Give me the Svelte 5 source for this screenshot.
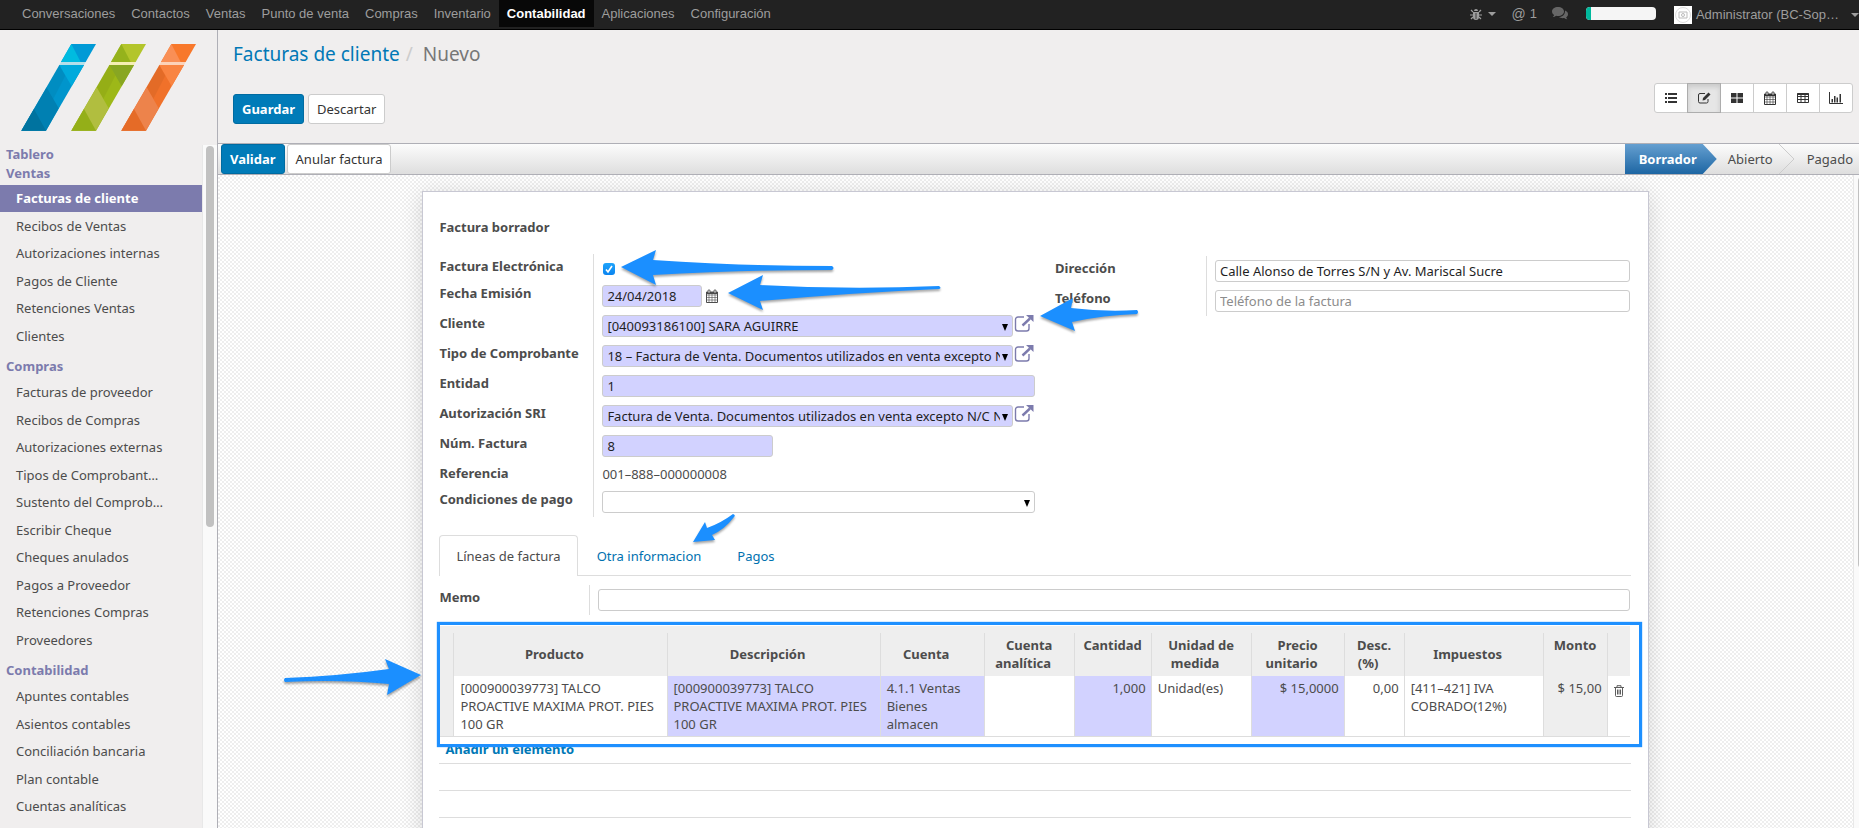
<script lang="ts">
  interface MenuSection {
    title: string;
    items: string[];
  }

  interface Field {
    id: string;
    label: string;
    kind: string;
    value: string;
    required: boolean;
  }

  const apps = [
    "Conversaciones",
    "Contactos",
    "Ventas",
    "Punto de venta",
    "Compras",
    "Inventario",
    "Contabilidad",
    "Aplicaciones",
    "Configuración",
  ];

  const sections: MenuSection[] = [
    { title: "Tablero", items: [] },
    {
      title: "Ventas",
      items: [
        "Facturas de cliente",
        "Recibos de Ventas",
        "Autorizaciones internas",
        "Pagos de Cliente",
        "Retenciones Ventas",
        "Clientes",
      ],
    },
    {
      title: "Compras",
      items: [
        "Facturas de proveedor",
        "Recibos de Compras",
        "Autorizaciones externas",
        "Tipos de Comprobant…",
        "Sustento del Comprob…",
        "Escribir Cheque",
        "Cheques anulados",
        "Pagos a Proveedor",
        "Retenciones Compras",
        "Proveedores",
      ],
    },
    {
      title: "Contabilidad",
      items: [
        "Apuntes contables",
        "Asientos contables",
        "Conciliación bancaria",
        "Plan contable",
        "Cuentas analíticas",
      ],
    },
  ];

  // Colores de las tres franjas del logo
  const stripes = [
    { x: 0, base: "#009ad6", top: "#00bbe0", band: "#b4dfe9", light: "#00aadc", mid: "#0095cc", low: "#0080b2", foot: "#00739f" },
    { x: 150, base: "#b3c52b", top: "#95b21c", band: "#f5eeb4", light: "#88a622", mid: "#9db818", low: "#b1be3f", foot: "#94af18" },
    { x: 300, base: "#f8782b", top: "#f98f56", band: "#fcd2b8", light: "#f98441", mid: "#f0712a", low: "#ed834b", foot: "#e56b27" },
  ];

  const views = ["list", "form", "kanban", "calendar", "pivot", "graph"];

  const fields: Field[] = [
    { id: "electronica", label: "Factura Electrónica", kind: "check", value: "", required: false },
    { id: "fecha", label: "Fecha Emisión", kind: "date", value: "24/04/2018", required: true },
    { id: "cliente", label: "Cliente", kind: "link", value: "[040093186100] SARA AGUIRRE", required: true },
    { id: "tipo", label: "Tipo de Comprobante", kind: "link", value: "18 – Factura de Venta. Documentos utilizados en venta excepto N/C N/D", required: true },
    { id: "entidad", label: "Entidad", kind: "text", value: "1", required: true },
    { id: "autorizacion", label: "Autorización SRI", kind: "link", value: "Factura de Venta. Documentos utilizados en venta excepto N/C N/D", required: true },
    { id: "numero", label: "Núm. Factura", kind: "short", value: "8", required: true },
    { id: "referencia", label: "Referencia", kind: "plain", value: "001–888–000000008", required: false },
    { id: "condiciones", label: "Condiciones de pago", kind: "select", value: "", required: false },
  ];

  const arrows = [
    "M622 267 L657 250 L654 260 Q740 266 833 266 Q836 268 833 270 Q740 270 654 275 L657 285 Z",
    "M729 293 L764 275 L761 285 Q850 290 940 286 Q943 288 940 289 Q850 293 761 301 L764 310 Z",
    "M1041 316 L1074 298 L1072 308 Q1105 312 1138 310 Q1140 312 1138 314 Q1105 315 1073 322 L1076 331 Z",
    "M694 542 L706 522 L708 528 Q722 523 734 514 Q737 515 735 517 Q726 529 713 535 L716 540 Z",
    "M422 675 L386 659 L390 669 Q340 676 286 678 Q284 680 286 682 Q340 679 390 684 L388 695 Z",
  ];

  const headers = [
    "Producto",
    "Descripción",
    "Cuenta",
    "Cuenta analítica",
    "Cantidad",
    "Unidad de medida",
    "Precio unitario",
    "Desc. (%)",
    "Impuestos",
    "Monto",
  ];

  let activeView = $state("form");
  let tab = $state("Líneas de factura");
  let checked = $state(true);
</script>

{#snippet calendarIcon()}
  <path d="M1.500 6h11 M1.500 8.500h11 M1.500 11h11 M4 4v9.500 M7 4v9.500 M10 4v9.500" fill="none" stroke="currentColor" stroke-width=".6" />
  <path d="M1.500 3h11v10.500h-11z" fill="none" stroke="currentColor" stroke-width="1" />
  <path d="M1.500 3h11v2h-11z" fill="currentColor" />
  <path d="M3 1h2v3H3z M9 1h2v3H9z" fill="#ddd" stroke="currentColor" stroke-width=".7" />
{/snippet}

<div class="app">
  <nav class="topbar">
    <div class="apps">
      {#each apps as app}
        <a href="#{app}" class:active={app === "Contabilidad"}>{app}</a>
      {/each}
    </div>
    <div class="systray">
      <button class="tray debug" aria-label="Depurar">
        <svg width="12" height="12" viewBox="0 0 12 12">
          <path d="M4 3a2 2 0 0 1 4 0z M3 4h6v5a3 3 0 0 1-6 0z" fill="currentColor" />
          <path d="M1 2l2 2M11 2L9 4M0 7h12M1 11l2-2M11 11L9 9" stroke="currentColor" stroke-width="1.200" />
          <path d="M6 5v6" stroke="#222" stroke-width=".8" />
        </svg>
        <span class="caret"></span>
      </button>
      <a class="tray mentions" href="#menciones"><span class="at">@</span> 1</a>
      <button class="tray chat" aria-label="Mensajes">
        <svg width="16" height="13" viewBox="0 0 16 13">
          <path d="M6 0c3.500 0 6 2 6 4.500S9.500 9 6 9c-.7 0-1.300 0-1.800-.2C3 9.700 2 10 .8 10c.7-.6 1.200-1.300 1.300-2C.8 7.200 0 6 0 4.500 0 2 2.500 0 6 0z" fill="#666" />
          <path d="M13 3.500c2 .8 3 2 3 3.700 0 1.300-.7 2.300-1.800 3 .1.800.6 1.500 1.300 2.100-1.200 0-2.300-.4-3.300-1.200-2 .3-4 0-5.400-1 3.800-.1 6.400-2.700 6.200-6.600z" fill="#666" />
        </svg>
      </button>
      <div class="progress"><div class="done"></div></div>
      <button class="tray user">
        <svg width="18" height="18" viewBox="0 0 18 18">
          <path d="M0 0h18v18H0z" fill="#fff" />
          <circle cx="9" cy="9" r="7.500" fill="none" stroke="#ddd" />
          <path d="M5 6h8v6H5z" fill="none" stroke="#bbb" />
          <circle cx="9" cy="9" r="1.500" fill="none" stroke="#bbb" />
        </svg>
        <span>Administrator (BC-Sop…</span>
        <span class="caret"></span>
      </button>
    </div>
  </nav>

  <div class="body">
    <aside>
      <svg class="logo" width="200" height="105" viewBox="0 0 600 315">
        {#each stripes as s}
          <g transform="translate({s.x} 0)">
            <polygon points="184,27 258,27 227,81 153,81" fill={s.base} />
            <polygon points="184,27 212,81 153,81" fill={s.top} />
            <polygon points="153,81 227,81 222,90 148,90" fill={s.band} />
            <polygon points="148,90 222,90 108,287 34,287" fill={s.mid} />
            <polygon points="148,90 222,90 185,154" fill={s.light} />
            <polygon points="148,90 166,122 130,192 110,157" fill="#000" opacity=".05" />
            <polygon points="110,157 146,220 108,287 34,287" fill={s.low} />
            <polygon points="72,222 108,287 34,287" fill={s.foot} />
          </g>
        {/each}
      </svg>
      <div class="menu">
        <div class="sections">
          {#each sections as section}
            <h4>{section.title}</h4>
            {#if section.items.length}
              <ul>
                {#each section.items as item}
                  <li><a href="#{item}" class:active={item === "Facturas de cliente"}>{item}</a></li>
                {/each}
              </ul>
            {/if}
          {/each}
        </div>
        <div class="track"><div class="thumb"></div></div>
      </div>
    </aside>

    <main>
      <header>
        <h1><a href="#facturas">Facturas de cliente</a><span class="slash">/</span><span>Nuevo</span></h1>
        <div class="controls">
          <div class="buttons">
            <button class="btn primary">Guardar</button>
            <button class="btn">Descartar</button>
          </div>
          <div class="switcher">
            {#each views as view}
              <button aria-label={view} class:active={activeView === view} onclick={() => (activeView = view)}>
                <svg width="14" height="14" viewBox="0 0 14 14">
                  {#if view === "list"}
                    <path d="M1 3h2M1 7h2M1 11h2M4 3h9M4 7h9M4 11h9" stroke="currentColor" stroke-width="1.800" />
                  {:else if view === "form"}
                    <path d="M8 2.500H3A1.500 1.500 0 0 0 1.500 4v6.500A1.500 1.500 0 0 0 3 12h6.500a1.500 1.500 0 0 0 1.500-1.500V8" fill="none" stroke="currentColor" />
                    <path d="M5.500 9.500l.5-2.500 5.500-5.500 2 2L8 9z" fill="currentColor" />
                  {:else if view === "kanban"}
                    <path d="M1 2h5.500v4.500H1z M7.500 2H13v4.500H7.500z M1 7.500h5.500V12H1z M7.500 7.500H13V12H7.500z" fill="currentColor" />
                  {:else if view === "calendar"}
                    {@render calendarIcon()}
                  {:else if view === "pivot"}
                    <path d="M1.500 2.500h11v9h-11z M1.500 5.500h11 M1.500 8.500h11 M5 3v8.500 M9 3v8.500" fill="none" stroke="currentColor" />
                    <path d="M1.500 2h11v2h-11z" fill="currentColor" />
                  {:else}
                    <path d="M.5 1v11.500H14" fill="none" stroke="currentColor" />
                    <path d="M2.500 8h1.500v3.500H2.500z M5 5h1.500v6.500H5z M7.500 6.500H9v5H7.500z M10.500 3H12v8.500h-1.500z" fill="currentColor" />
                  {/if}
                </svg>
              </button>
            {/each}
          </div>
        </div>
      </header>

      <div class="statusbar">
        <button class="btn primary">Validar</button>
        <button class="btn">Anular factura</button>
        <ol>
          <li class="current">Borrador</li>
          <li class="next">
            Abierto
            <svg width="16" height="30" viewBox="0 0 16 30"><path d="M0 0l15 15L0 30" fill="none" stroke="#ccc" /></svg>
          </li>
          <li>Pagado</li>
        </ol>
      </div>

      <div class="content">
        <div class="canvas">
          <section class="sheet">
            <h2>Factura borrador</h2>

            <div class="groups">
              <div class="group left">
                {#each fields as f}
                  <div class="row {f.kind}">
                    {#if f.kind === "plain"}
                      <span class="label">{f.label}</span>
                    {:else}
                      <label class="label" for={f.id}>{f.label}</label>
                    {/if}
                    <div class="value">
                      {#if f.kind === "check"}
                        <input type="checkbox" id={f.id} bind:checked />
                        {#if checked}
                          <svg class="tick" width="12" height="12" viewBox="0 0 12 12">
                            <path d="M3 6.500l2 2.500 4-6" fill="none" stroke="#fff" stroke-width="1.600" />
                          </svg>
                        {/if}
                      {:else if f.kind === "date"}
                        <input type="text" id={f.id} class="required" value={f.value} />
                        <svg width="14" height="15" viewBox="0 0 14 15">{@render calendarIcon()}</svg>
                      {:else if f.kind === "link" || f.kind === "select"}
                        <div class="combo">
                          <select id={f.id} class:required={f.required}>
                            <option>{f.value}</option>
                          </select>
                          <svg class="drop" width="6" height="7" viewBox="0 0 6 7"><path d="M0 0h6L3 7z" fill="#000" /></svg>
                        </div>
                        {#if f.kind === "link"}
                          <button class="open" aria-label="Abrir {f.label}">
                            <svg width="20" height="18" viewBox="0 0 20 18">
                              <path d="M10 2H4a2.500 2.500 0 0 0-2.500 2.500v9A2.500 2.500 0 0 0 4 16h8.500a2.500 2.500 0 0 0 2.500-2.500V9" fill="none" stroke="#7c7bad" stroke-width="1.400" />
                              <path d="M8.500 10.500L16 3.500" stroke="#7c7bad" stroke-width="2.400" />
                              <path d="M12 0h7.500v7z" fill="#7c7bad" />
                            </svg>
                          </button>
                        {/if}
                      {:else if f.kind === "plain"}
                        <span>{f.value}</span>
                      {:else}
                        <input type="text" id={f.id} class="required" value={f.value} />
                      {/if}
                    </div>
                  </div>
                {/each}
              </div>

              <div class="group right">
                <div class="row">
                  <label class="label" for="direccion">Dirección</label>
                  <div class="value">
                    <input type="text" id="direccion" value="Calle Alonso de Torres S/N y Av. Mariscal Sucre" />
                  </div>
                </div>
                <div class="row">
                  <label class="label" for="telefono">Teléfono</label>
                  <div class="value">
                    <input type="text" id="telefono" placeholder="Teléfono de la factura" />
                  </div>
                </div>
              </div>
            </div>

            <div class="tabs">
              {#each ["Líneas de factura", "Otra informacion", "Pagos"] as name}
                <button class:active={tab === name} onclick={() => (tab = name)}>{name}</button>
              {/each}
            </div>

            <div class="group memo">
              <div class="row">
                <label class="label" for="memo">Memo</label>
                <div class="value"><input type="text" id="memo" /></div>
              </div>
            </div>

            <div class="lines">
              <table>
                <colgroup>
                  <col class="c-handle" />
                  <col />
                  <col />
                  <col class="c-account" />
                  <col class="c-analytic" />
                  <col class="c-qty" />
                  <col class="c-uom" />
                  <col class="c-price" />
                  <col class="c-disc" />
                  <col class="c-tax" />
                  <col class="c-total" />
                  <col class="c-trash" />
                </colgroup>
                <thead>
                  <tr>
                    <th></th>
                    {#each headers as h}
                      <th class="sortable">{h}</th>
                    {/each}
                    <th></th>
                  </tr>
                </thead>
                <tbody>
                  <tr>
                    <td class="handle"></td>
                    <td>[000900039773] TALCO PROACTIVE MAXIMA PROT. PIES 100 GR</td>
                    <td class="required">[000900039773] TALCO PROACTIVE MAXIMA PROT. PIES 100 GR</td>
                    <td class="required">4.1.1 Ventas Bienes almacen</td>
                    <td></td>
                    <td class="required number">1,000</td>
                    <td>Unidad(es)</td>
                    <td class="required number">$ 15,0000</td>
                    <td class="number">0,00</td>
                    <td>[411–421] IVA COBRADO(12%)</td>
                    <td class="readonly number">$ 15,00</td>
                    <td class="trash">
                      <button aria-label="Eliminar">
                        <svg width="10" height="12" viewBox="0 0 10 12">
                          <path d="M0 2.500h10M3 2V.7h4V2M1.500 3v7.500a1 1 0 0 0 1 1h5a1 1 0 0 0 1-1V3M3.500 4.500v5M5 4.500v5M6.500 4.500v5" fill="none" stroke="#4c4c4c" stroke-width=".9" />
                        </svg>
                      </button>
                    </td>
                  </tr>
                </tbody>
              </table>
              <div class="frame"></div>
            </div>
            <div class="extra"><a href="#nuevo">Añadir un elemento</a></div>
            <div class="extra"></div>
            <div class="extra"></div>
            <div class="extra"></div>

            <svg class="marks" width="800" height="400" viewBox="423 191 800 400">
              {#each arrows as d}
                <path {d} />
              {/each}
            </svg>
          </section>
        </div>
        <div class="page-track"><div class="page-thumb"></div></div>
      </div>
    </main>
  </div>
</div>

<style>
  :global(body) {
    margin: 0;
  }

  .app,
  .app :global(*) {
    box-sizing: border-box;
  }

  .app {
    height: 100vh;
    display: flex;
    flex-direction: column;
    overflow: hidden;
    font-family: "Noto Sans", "Lucida Grande", sans-serif;
    font-size: 13px;
    line-height: 18px;
    color: #4c4c4c;
    background: #f0eeee;
  }

  a {
    text-decoration: none;
  }

  svg {
    display: block;
  }

  button,
  input,
  select {
    font: inherit;
    margin: 0;
  }

  ul,
  ol {
    list-style: none;
    margin: 0;
    padding: 0;
  }

  /* Barra superior */
  .topbar {
    flex: none;
    display: flex;
    justify-content: space-between;
    height: 30px;
    padding-left: 14px;
    background: #222;
    border-bottom: 1px solid #000;
    font-family: "Liberation Sans", Helvetica, sans-serif;
    white-space: nowrap;
  }

  .apps {
    display: flex;
  }

  .apps a {
    height: 27px;
    padding: 0 8px;
    line-height: 27px;
    color: #9d9d9d;
  }

  .apps a.active {
    background: #080808;
    color: #fff;
    font-weight: bold;
  }

  .systray {
    display: flex;
    align-items: center;
    height: 27px;
  }

  .tray {
    display: flex;
    align-items: center;
    padding: 0;
    border: 0;
    background: none;
    color: #9d9d9d;
  }

  .caret {
    border: 4px solid transparent;
    border-top-color: currentColor;
    border-bottom: 0;
  }

  .debug {
    gap: 6px;
    margin-right: 16px;
  }

  .mentions {
    gap: 4px;
    margin-right: 15px;
  }

  .at {
    font-size: 14px;
  }

  .chat {
    margin-right: 18px;
  }

  .progress {
    width: 70px;
    height: 13px;
    margin-right: 18px;
    border-radius: 4px;
    background: #f5f5f5;
    overflow: hidden;
  }

  .done {
    width: 5px;
    height: 100%;
    background: #00b89c;
  }

  .user {
    gap: 4px;
    padding-top: 3px;
  }

  .user .caret {
    margin-left: 8px;
  }

  .body {
    flex: 1;
    display: flex;
    min-height: 0;
  }

  /* Menú lateral */
  aside {
    flex: none;
    display: flex;
    flex-direction: column;
    width: 218px;
    border-right: 1px solid #afafb6;
  }

  .logo {
    flex: none;
    margin: 5px 0 5px 10px;
  }

  .menu {
    flex: 1;
    display: flex;
    min-height: 0;
    overflow: hidden;
  }

  .sections {
    flex: 1;
  }

  h4 {
    margin: 0;
    padding: 7px 0 4px 6px;
    font-size: 13px;
    line-height: 18px;
    color: #7c7bad;
  }

  h4:first-child {
    padding: 0 0 0 6px;
  }

  h4:nth-child(2) {
    padding: 1px 0 3px 6px;
  }

  li a {
    display: block;
    height: 27px;
    padding-left: 16px;
    line-height: 27px;
    color: #4c4c4c;
    white-space: nowrap;
  }

  li:nth-child(even) a {
    height: 28px;
    line-height: 28px;
  }

  li a.active {
    background: #7c7bad;
    color: #fff;
    font-weight: bold;
  }

  .track {
    width: 15px;
    padding: 1px 3px;
    background: #fafafa;
    border-left: 1px solid #e8e8e8;
  }

  .thumb {
    width: 8px;
    height: 56%;
    border-radius: 4px;
    background: #c1c1c1;
  }

  /* Zona principal */
  main {
    flex: 1;
    display: flex;
    flex-direction: column;
    min-width: 0;
  }

  header {
    flex: none;
    padding: 12px 6px 19px 15px;
    border-bottom: 1px solid #afafb6;
  }

  h1 {
    margin: 0 0 17px;
    font-size: 19px;
    font-weight: normal;
    line-height: 24px;
    color: #777;
  }

  h1 a {
    color: #0078b6;
  }

  .slash {
    padding: 0 10px 0 6px;
    color: #ccc;
  }

  .controls {
    display: flex;
    justify-content: space-between;
  }

  .buttons {
    display: flex;
    gap: 4px;
    padding-top: 11px;
  }

  .btn {
    height: 30px;
    padding: 0 8px;
    border: 1px solid #ccc;
    border-radius: 3px;
    background: #fff;
    color: #333;
    white-space: nowrap;
  }

  .btn.primary {
    border-color: #006ba1;
    background: #007bb8;
    color: #fff;
    font-weight: bold;
  }

  .switcher {
    display: flex;
    align-self: flex-start;
  }

  .switcher button {
    display: flex;
    align-items: center;
    justify-content: center;
    width: 34px;
    height: 30px;
    margin-left: -1px;
    padding: 0;
    border: 1px solid #ccc;
    background: #fff;
    color: #333;
  }

  .switcher button:first-child {
    border-radius: 3px 0 0 3px;
  }

  .switcher button:last-child {
    border-radius: 0 3px 3px 0;
  }

  .switcher button.active {
    position: relative;
    border-color: #adadad;
    background: #e6e6e6;
    box-shadow: inset 0 3px 5px rgba(0, 0, 0, 0.125);
  }

  .statusbar {
    flex: none;
    display: flex;
    gap: 2px;
    height: 31px;
    padding-left: 3px;
    border-bottom: 1px solid #afafb6;
    background: linear-gradient(#fcfcfc, #dedede);
  }

  ol {
    display: flex;
    margin-left: auto;
    line-height: 30px;
  }

  ol li {
    padding: 0 6px 0 12px;
  }

  .current {
    padding: 0 20px 0 14px;
    background: linear-gradient(#659fd0, #1d66a3);
    clip-path: polygon(0 0, calc(100% - 14px) 0, 100% 50%, calc(100% - 14px) 100%, 0 100%);
    color: #fff;
    font-weight: bold;
  }

  .next {
    display: flex;
    gap: 6px;
    padding: 0 0 0 11px;
  }

  .content {
    flex: 1;
    display: flex;
    min-height: 0;
    overflow: hidden;
  }

  .canvas {
    flex: 1;
    padding-top: 16px;
    background: repeating-conic-gradient(#eee 0 25%, #fff 0 50%) 0 0 / 4px 4px;
  }

  .page-track {
    flex: none;
    width: 6px;
    padding: 2px 0 0 4px;
    overflow: hidden;
    background: #fafafa;
    border-left: 1px solid #e8e8e8;
  }

  .page-thumb {
    width: 8px;
    height: 60%;
    border-radius: 4px;
    background: #c1c1c1;
  }

  /* Hoja del formulario */
  .sheet {
    position: relative;
    width: 75%;
    min-height: 100%;
    margin: 0 auto;
    padding: 26px 17px 16px 16px;
    border: 1px solid #c8c8d3;
    background: #fff;
    box-shadow: 0 4px 20px rgba(0, 0, 0, 0.15);
  }

  h2 {
    margin: 0 0 18px;
    font-size: 13px;
    line-height: 18px;
  }

  .groups {
    display: grid;
    grid-template-columns: minmax(0, 1fr) minmax(0, 1fr);
  }

  .group.right {
    padding: 2px 0 0 20px;
  }

  .row {
    display: grid;
    grid-template-columns: 154px minmax(0, 1fr);
    height: 30px;
  }

  .right .row {
    grid-template-columns: 151px minmax(0, 1fr);
  }

  .memo .row {
    grid-template-columns: 150px minmax(0, 1fr);
  }

  .label {
    padding-top: 3px;
    font-weight: bold;
    white-space: nowrap;
  }

  .value {
    position: relative;
    display: flex;
    padding: 4px 0 4px 8px;
    border-left: 1px solid #ddd;
  }

  .right .value,
  .memo .value {
    padding-right: 1px;
  }

  .row.check {
    height: 27px;
  }

  .row.plain {
    height: 26px;
  }

  input[type="text"],
  select {
    width: 100%;
    height: 22px;
    padding: 0 4px;
    border: 1px solid #ccc;
    border-radius: 3px;
    background: #fff;
    color: #1f1f1f;
  }

  input::placeholder {
    color: #8c8c8c;
  }

  input.required[type="text"],
  select.required {
    background: #d2d2ff;
  }

  .date input[type="text"] {
    width: 100px;
  }

  .date svg {
    margin: 4px 0 0 3px;
  }

  .short input[type="text"] {
    width: 171px;
  }

  .check .value {
    padding: 9px 0 0 9px;
  }

  input[type="checkbox"] {
    appearance: none;
    width: 12px;
    height: 12px;
    border-radius: 3px;
    background: #fff;
    border: 1px solid #aaa;
  }

  input[type="checkbox"]:checked {
    border: 0;
    background: linear-gradient(#1fa4fb, #0a84f0);
  }

  .tick {
    position: absolute;
    top: 9px;
    left: 9px;
    pointer-events: none;
  }

  .combo {
    position: relative;
    flex: 1;
    min-width: 0;
  }

  select {
    appearance: none;
    display: block;
    padding-right: 12px;
  }

  .drop {
    position: absolute;
    top: 9px;
    right: 5px;
    pointer-events: none;
  }

  .open {
    width: 22px;
    height: 18px;
    padding: 0 0 0 1px;
    border: 0;
    background: none;
  }

  .tabs {
    display: flex;
    gap: 2px;
    margin-top: 18px;
    border-bottom: 1px solid #ddd;
  }

  .tabs button {
    height: 41px;
    margin-bottom: -1px;
    padding: 0 16px;
    border: 1px solid transparent;
    border-bottom: 0;
    border-radius: 4px 4px 0 0;
    background: none;
    color: #0071af;
  }

  .tabs button.active {
    border-color: #ddd;
    background: #fff;
    color: #4c4c4c;
  }

  .memo {
    margin: 9px 0 11px;
  }

  /* Líneas de la factura */
  .lines {
    position: relative;
    margin-right: 1px;
    border-top: 7px solid #eee;
  }

  table {
    width: 100%;
    table-layout: fixed;
    border-collapse: separate;
    border-spacing: 0;
  }

  .c-handle {
    width: 14px;
  }
  .c-account {
    width: 104px;
  }
  .c-analytic {
    width: 90px;
  }
  .c-qty {
    width: 77px;
  }
  .c-uom {
    width: 100px;
  }
  .c-price {
    width: 93px;
  }
  .c-disc {
    width: 60px;
  }
  .c-tax {
    width: 139px;
  }
  .c-total {
    width: 64px;
  }
  .c-trash {
    width: 23px;
  }

  th,
  td {
    padding: 3px 6px;
    border-left: 1px solid #ddd;
  }

  th:first-child,
  td:first-child {
    border-left: 0;
  }

  th {
    background: #eee;
    text-align: center;
    vertical-align: middle;
    padding-bottom: 4px;
  }

  .sortable::after {
    content: "";
    display: inline-block;
    width: 12px;
  }

  td {
    height: 61px;
    border-bottom: 1px solid #ddd;
    text-align: left;
    vertical-align: top;
  }

  td.required {
    background: #d2d2ff;
  }

  td.number {
    padding-right: 5px;
    padding-left: 0;
    text-align: right;
    white-space: nowrap;
  }

  td.handle,
  td.readonly {
    background: #eee;
  }

  td.trash {
    padding: 7px 0 0 6px;
  }

  .trash button {
    padding: 0;
    border: 0;
    background: none;
  }

  .frame {
    position: absolute;
    inset: -11px -12px -10px -2px;
    border: 3px solid #1e90ff;
    box-shadow: 0 0 1px #1e90ff;
    pointer-events: none;
  }

  .extra {
    height: 27px;
    padding: 3px 6px;
    border-bottom: 1px solid #ddd;
  }

  .extra a {
    color: #0078b6;
    font-weight: bold;
  }

  /* Flechas de la guía */
  .marks {
    position: absolute;
    top: -1px;
    left: -1px;
    overflow: visible;
    pointer-events: none;
  }

  .marks path {
    fill: #1b8fff;
    filter: drop-shadow(0 2px 1px rgba(0, 0, 0, 0.35));
  }
</style>
